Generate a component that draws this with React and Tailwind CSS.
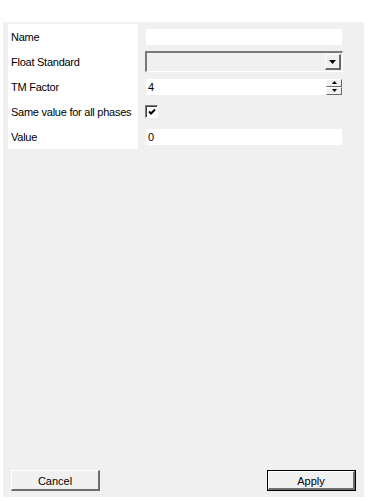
import React from 'react';

const font = { fontFamily: '"Liberation Sans", Arial, sans-serif' };

function TextBox({ value }) {
  return (
    <div className="w-[196px] h-[16px] bg-white flex items-center pl-[2px] pt-[1px] text-[11px] text-black">
      {value}
    </div>
  );
}

function ComboBox() {
  return (
    <div className="w-[198px] h-[21px] border-t-2 border-l-2 border-t-[#7a7a7a] border-l-[#7a7a7a] border-b border-r border-b-white border-r-white bg-[#f0f0f0] flex items-center justify-end pr-[1px] -ml-[1px]">
      <div className="w-[16px] h-[16px] bg-[#f0f0f0] border-t border-l border-t-white border-l-white border-b-2 border-r-2 border-b-[#696969] border-r-[#696969] flex items-center justify-center">
        <svg width="7" height="4" viewBox="0 0 7 4">
          <path d="M0 0H7L3.5 4Z" fill="#000" />
        </svg>
      </div>
    </div>
  );
}

function SpinBox({ value }) {
  return (
    <div className="w-[196px] h-[16px] bg-white flex items-center text-[11px] text-black">
      <span className="pl-[2px] pt-[1px] flex-1">{value}</span>
      <div className="w-[16px] h-[16px] flex flex-col">
        <div className="h-[8px] bg-[#f0f0f0] border-t border-l border-white border-b border-r border-b-[#696969] border-r-[#696969] flex items-center justify-center">
          <svg width="5" height="3" viewBox="0 0 5 3">
            <path d="M2.5 0L5 3H0Z" fill="#000" />
          </svg>
        </div>
        <div className="h-[8px] bg-[#f0f0f0] border-t border-l border-white border-b border-r border-b-[#696969] border-r-[#696969] flex items-center justify-center">
          <svg width="5" height="3" viewBox="0 0 5 3">
            <path d="M0 0H5L2.5 3Z" fill="#000" />
          </svg>
        </div>
      </div>
    </div>
  );
}

function CheckBox() {
  return (
    <div className="w-[13px] h-[13px] bg-white border-t border-l border-t-[#7a7a7a] border-l-[#7a7a7a] border-b border-r border-b-white border-r-white -ml-[1px] flex items-center justify-center">
      <div className="w-[11px] h-[11px] border-t border-l border-[#404040] border-b-0 border-r-0 flex items-center justify-center">
        <svg width="8" height="8" viewBox="0 0 8 8">
          <path d="M1 3.5L3 5.5L7 1.5" stroke="#000" strokeWidth="2" fill="none" />
        </svg>
      </div>
    </div>
  );
}

const rows = [
  { label: 'Name', field: <TextBox value="" /> },
  { label: 'Float Standard', field: <ComboBox /> },
  { label: 'TM Factor', field: <SpinBox value="4" /> },
  { label: 'Same value for all phases', field: <CheckBox /> },
  { label: 'Value', field: <TextBox value="0" /> },
];

export default function App() {
  return (
    <div className="w-[368px] h-[501px] bg-white pt-[22px] pl-[3px]" style={font}>
      <div className="w-[361px] h-[475px] bg-[#f0f0f0] flex flex-col">
        {/* form */}
        <div className="flex mt-[2px] ml-[5px]">
          <div className="w-[130px] bg-white flex flex-col">
            {rows.map((r) => (
              <div key={r.label} className="h-[25px] flex items-center pl-[3px] pt-[2px] text-[11px] tracking-[-0.25px] text-black whitespace-nowrap">
                {r.label}
              </div>
            ))}
          </div>
          <div className="flex flex-col ml-[8px]">
            {rows.map((r) => (
              <div key={r.label} className="h-[25px] flex items-center">
                {r.field}
              </div>
            ))}
          </div>
        </div>

        {/* buttons */}
        <div className="mt-auto mb-[6px] flex justify-between pl-[8px] pr-[8px]">
          <button className="w-[89px] h-[21px] bg-[#f0f0f0] border-t border-l border-t-white border-l-white border-b-2 border-r-2 border-b-[#6d6d6d] border-r-[#6d6d6d] pt-[2px] text-[11px] text-black">
            Cancel
          </button>
          <button className="w-[89px] h-[21px] border border-black bg-[#f0f0f0] p-0">
            <div className="w-full h-full border-t border-l border-t-white border-l-white border-b-2 border-r-2 border-b-[#6d6d6d] border-r-[#6d6d6d] pt-[2px] flex items-center justify-center text-[11px] text-black">
              Apply
            </div>
          </button>
        </div>
      </div>
    </div>
  );
}
